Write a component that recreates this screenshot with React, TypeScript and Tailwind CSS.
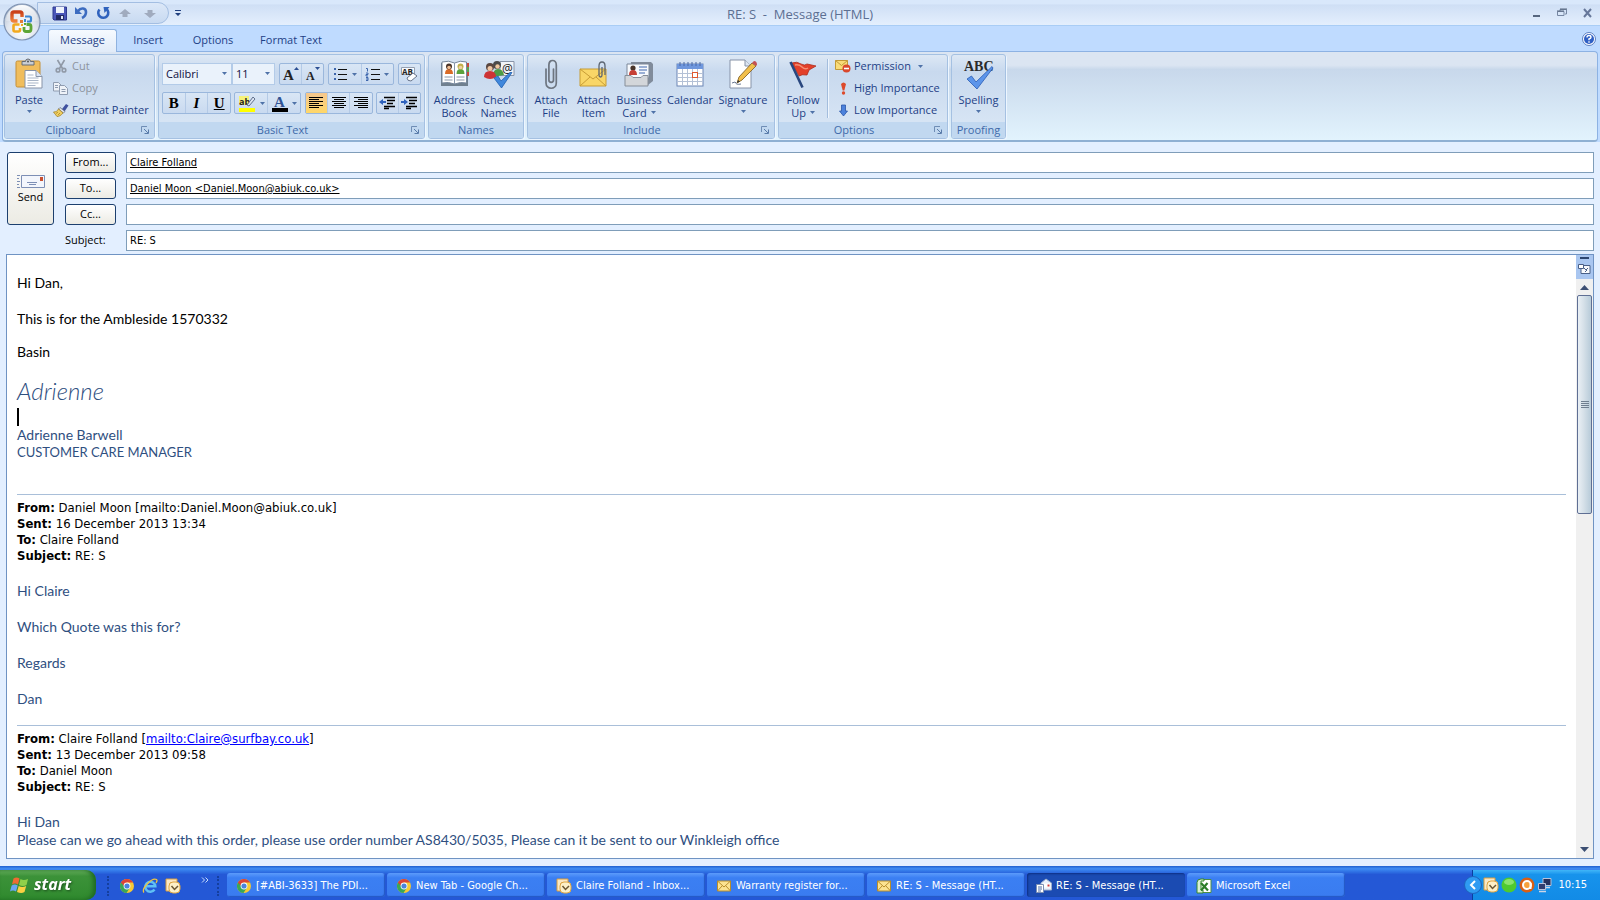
import type { ReactNode } from "react";

const UI = "font-['Open_Sans','Noto_Sans',sans-serif]";
const TAHOMA = "font-['DejaVu_Sans_Condensed','DejaVu_Sans',sans-serif]";

const TASKS = [
  { title: "[#ABI-3633] The PDI...", icon: <ChromeIcon />, active: false },
  { title: "New Tab - Google Ch...", icon: <ChromeIcon />, active: false },
  { title: "Claire Folland - Inbox...", icon: <OutlookIcon />, active: false },
  { title: "Warranty register for...", icon: <MailIcon />, active: false },
  { title: "RE: S - Message (HT...", icon: <MailIcon />, active: false },
  { title: "RE: S - Message (HT...", icon: <OpenMailIcon />, active: true },
  { title: "Microsoft Excel", icon: <ExcelIcon />, active: false },
];

/* ---------- Small shared pieces ---------- */

function Arrow({ className = "" }: { className?: string }) {
  return (
    <svg className={`w-[5px] h-[3px] shrink-0 ${className}`} viewBox="0 0 5 3">
      <path d="M0 0h5L2.5 3z" fill="#4f72a8" />
    </svg>
  );
}

function Group({ label, launcher, className, children }: { label: string; launcher?: boolean; className: string; children: ReactNode }) {
  return (
    <section className={`flex flex-col shrink-0 h-[85px] rounded-[3px] border border-[#a5c1e2] shadow-[1px_1px_0_#edf6ff] bg-linear-to-b from-[#dde8f5] from-0% via-[#c8d9ee] via-20% to-[#dbe8f6] ${className}`}>
      <div className="flex flex-1 min-h-0">{children}</div>
      <div className={`relative h-4 bg-[#c1d8f0] rounded-b-[2px] text-center leading-4 text-[#3e6aaa] ${launcher ? "pr-[18px]" : ""}`}>
        {label}
        {launcher && (
          <button aria-label={`${label} settings`} className="absolute right-1 top-1">
            <svg width="9" height="9" viewBox="0 0 9 9" fill="none">
              <path d="M.5 6V.5H6" stroke="#6f8db5" />
              <path d="M3 3l4 4M7.5 3.5v4h-4" stroke="#5a7caa" />
            </svg>
          </button>
        )}
      </div>
    </section>
  );
}

function BigButton({ icon, lines, arrow, className }: { icon: ReactNode; lines: string[]; arrow?: boolean; className: string }) {
  return (
    <button className={`flex flex-col items-center shrink-0 pt-[3px] leading-[13px] text-[#1e3f86] ${className}`}>
      <span className="flex h-8 mb-[3px] items-center justify-center">{icon}</span>
      <span className="whitespace-nowrap">{lines[0]}</span>
      {lines[1] ? (
        <span className="flex items-center gap-1 whitespace-nowrap">
          {lines[1]}
          {arrow && <Arrow />}
        </span>
      ) : (
        arrow && <Arrow className="mt-1" />
      )}
    </button>
  );
}

function SmallButton({ icon, label, arrow, disabled }: { icon: ReactNode; label: string; arrow?: boolean; disabled?: boolean }) {
  return (
    <button disabled={disabled} className={`flex items-center gap-[3px] h-[22px] whitespace-nowrap ${disabled ? "text-[#8d949e]" : "text-[#1e3f86]"}`}>
      <span className="flex w-4 justify-center">{icon}</span>
      {label}
      {arrow && <Arrow className="ml-1" />}
    </button>
  );
}

function ToolSet({ className, children }: { className: string; children: ReactNode }) {
  return (
    <div className={`flex h-[22px] shrink-0 rounded-[2px] border border-[#9ab7dc] divide-x divide-[#b4cae6] bg-linear-to-b from-[#d9e6f5] to-[#c9daf0] ${className}`}>
      {children}
    </div>
  );
}

function Tool({ label, active, children }: { label: string; active?: boolean; children: ReactNode }) {
  return (
    <button aria-label={label} className={`flex flex-1 items-center justify-center gap-1 ${active ? "bg-linear-to-b from-[#f5c78d] to-[#ffd768]" : ""}`}>
      {children}
    </button>
  );
}

function Combo({ label, value, className }: { label: string; value: string; className: string }) {
  return (
    <div className={`relative h-[22px] border border-[#b3cbe8] bg-[#eaf2fb] ${className}`}>
      <select aria-label={label} className="w-full h-full appearance-none pl-[3px] text-[#101040] outline-none">
        <option>{value}</option>
      </select>
      <Arrow className="absolute right-1 top-2" />
    </div>
  );
}

function Lines({ rows }: { rows: [number, number][] }) {
  return (
    <svg width="16" height="14" viewBox="0 0 16 14">
      {rows.map(([x, w], i) => (
        <rect key={i} x={x} y={1 + i * 2} width={w} height="1" fill="#000" />
      ))}
    </svg>
  );
}

/* ---------- Title bar icons ---------- */

function OfficeButton() {
  return (
    <svg width="38" height="38" viewBox="0 0 38 38">
      <defs>
        <radialGradient id="orb" cx="50%" cy="75%" r="75%">
          <stop offset="0" stopColor="#ffffff" />
          <stop offset=".55" stopColor="#dfe5ee" />
          <stop offset="1" stopColor="#a9b6c9" />
        </radialGradient>
        <linearGradient id="orbShine" x1="0" y1="0" x2="0" y2="1">
          <stop offset="0" stopColor="#fff" />
          <stop offset="1" stopColor="#fff" stopOpacity=".2" />
        </linearGradient>
        <linearGradient id="orbRed" x1="0" y1="0" x2="0" y2="1">
          <stop offset="0" stopColor="#c9401a" />
          <stop offset="1" stopColor="#f0803a" />
        </linearGradient>
      </defs>
      <circle cx="19" cy="19" r="18" fill="url(#orb)" stroke="#7f93b2" strokeWidth="1.2" />
      <path d="M3 18a16 16 0 0 1 32 0z" fill="url(#orbShine)" />
      <g fill="none" strokeLinejoin="round">
        <path d="M14.500 18H11q-2 0-2-2V11q0-2 2-2h6q2 0 2 2v3" stroke="url(#orbRed)" strokeWidth="3.400" />
        <path d="M22 13.500h4.500q1.500 0 1.500 1.500v2q0 1.500-1.500 1.500H24" stroke="#3b86d4" strokeWidth="2.200" />
        <path d="M16.500 21.500H12q-1.500 0-1.500 1.500v4q0 1.500 1.500 1.500h3.500q1.500 0 1.500-1.500V25" stroke="#f2a91d" strokeWidth="2.600" />
        <path d="M23.500 21.500H26q2 0 2 2V26q0 2.500-2 2.500h-3q-2 0-2-2V24" stroke="#5da636" strokeWidth="2.800" />
      </g>
      <rect x="17" y="17" width="3" height="3" fill="#e07a3b" />
      <rect x="21" y="16" width="2" height="3" fill="#3b86d4" />
      <rect x="18" y="21" width="2" height="2" fill="#f2a91d" />
      <rect x="21" y="20" width="2" height="2" fill="#5da636" />
    </svg>
  );
}

function QuickAccess() {
  return (
    <div className="flex items-center gap-[5px] h-[22px] pl-[14px] pr-[10px] rounded-r-full border border-[#a3bee2] bg-linear-to-b from-[#dce8f8] to-[#c8daf1]">
      <button aria-label="Save">
        <svg width="16" height="16" viewBox="0 0 16 16">
          <path d="M1 2h13.500v13H2L1 14z" fill="#4a56b8" stroke="#2f3a8f" />
          <path d="M4 2h8v6H4z" fill="#eef3fc" />
          <path d="M4 10h8v5H4z" fill="#222b66" />
          <path d="M9 11h2v3H9z" fill="#dfe6f5" />
        </svg>
      </button>
      <button aria-label="Undo">
        <svg width="17" height="16" viewBox="0 0 17 16">
          <path d="M5 6c3-4 8-3 8 1 0 3-2 5-4 6" fill="none" stroke="#3d6cc0" strokeWidth="2.600" />
          <path d="M2 2v7h7z" fill="#3d6cc0" />
        </svg>
      </button>
      <button aria-label="Repeat">
        <svg width="17" height="16" viewBox="0 0 17 16">
          <path d="M4.500 4.500a5 5 0 1 0 7-.500" fill="none" stroke="#2f62bd" strokeWidth="2.600" />
          <path d="M8.500 2h6L9.500 8z" fill="#2f62bd" />
        </svg>
      </button>
      <button aria-label="Previous item">
        <svg width="16" height="14" viewBox="0 0 16 14">
          <path d="M8 3l6 5h-3.500v3h-5V8H2z" fill="#a0abbe" />
        </svg>
      </button>
      <button aria-label="Next item" className="ml-1">
        <svg width="16" height="14" viewBox="0 0 16 14">
          <path d="M8 12L2 7h3.500V4h5v3H14z" fill="#a0abbe" />
        </svg>
      </button>
    </div>
  );
}

/* ---------- Ribbon icons ---------- */

function PasteIcon() {
  return (
    <svg width="28" height="32" viewBox="0 0 28 32">
      <rect x="1" y="3" width="24" height="26" rx="1.500" fill="#f0bd5c" stroke="#c48f36" />
      <path d="M7 7V3.500h3.500a2.500 2.500 0 0 1 5 0H19V7z" fill="#c9cdd3" stroke="#666c75" />
      <circle cx="13" cy="3.500" r="1" fill="#555" />
      <path d="M10 12.500h11l6 6V30H10z" fill="#fff" stroke="#8793a8" />
      <path d="M21 12.500v6h6" fill="#dce5f2" stroke="#8793a8" />
      <path d="M12.500 17h6M12.500 20h11M12.500 22.500h11M12.500 25h11M12.500 27.500h8" stroke="#a9b5c7" />
    </svg>
  );
}

function ScissorsIcon() {
  return (
    <svg width="12" height="14" viewBox="0 0 12 14" fill="none" stroke="#9099a6" strokeWidth="1.600">
      <path d="M2.500 1l5 8.500M9.500 1L4.500 9.500" />
      <circle cx="3" cy="11.200" r="1.800" />
      <circle cx="9" cy="11.200" r="1.800" />
    </svg>
  );
}

function CopyIcon() {
  return (
    <svg width="16" height="14" viewBox="0 0 16 14" fill="#eef2f8" stroke="#8f9cb0">
      <path d="M.5 1.500h5l2.500 2.500v6H.5z" />
      <path d="M6.500 4.500h5l3 3v6h-8z" />
      <path d="M2 4.500h3M2 6.500h3M8.500 8.500h4M8.500 10.500h4" />
    </svg>
  );
}

function BrushIcon() {
  return (
    <svg width="16" height="14" viewBox="0 0 16 14">
      <path d="M9 6l4-5 2.500 1.500-4 6z" fill="#3f51a0" />
      <path d="M7 4.500l5 4-1.500 1.500-5-4z" fill="#e4e7ee" stroke="#666e80" strokeWidth=".8" />
      <path d="M5.500 6L10 10c-2 2.500-4 3.500-6 3.500L.5 9C3 9 4.500 8 5.500 6z" fill="#f0cf62" stroke="#a3842c" strokeWidth=".8" />
      <path d="M3 10.500l2-1.500M5 12l2-2" stroke="#b9962f" />
    </svg>
  );
}

function AddressBookIcon() {
  return (
    <svg width="30" height="28" viewBox="0 0 30 28">
      <path d="M1 3h27v23H1z" fill="#70808f" />
      <path d="M26 3h3v4h-3zM26 12h3v4h-3z" fill="#c94b3b" />
      <path d="M26 7h3v5h-3z" fill="#5fa447" />
      <path d="M2 2q7-2 12.500 1Q20 0 26.500 2v21q-6-1.500-12 1-6-2.500-12.500-1z" fill="#fff" stroke="#77889d" />
      <path d="M14.500 3v21" stroke="#8696aa" />
      <path d="M5 14q0-5 4-5t4 5z" fill="#d96b27" />
      <circle cx="9" cy="6.500" r="3" fill="#4b3428" />
      <path d="M16.500 14q0-5 4-5t4 5z" fill="#5ba33c" />
      <circle cx="20.500" cy="6.500" r="3" fill="#c2b04b" />
      <circle cx="9" cy="7.500" r="1.800" fill="#efbd93" />
      <circle cx="20.500" cy="7.500" r="1.800" fill="#efd0a5" />
      <path d="M4.500 17h8M4.500 20h8M16.500 17h8M16.500 20h8" stroke="#8b99ab" />
    </svg>
  );
}

function CheckNamesIcon() {
  return (
    <svg width="32" height="29" viewBox="0 0 32 29">
      <path d="M17 1.500h14v14H17z" fill="#f1f4f9" stroke="#8894a8" />
      <text x="19" y="13" fontSize="12" fill="#222" fontFamily="Open Sans">@</text>
      <circle cx="14" cy="5" r="4" fill="#4a4a4a" />
      <path d="M10 17q0-8 5-8t6 6z" fill="#4c9c46" />
      <circle cx="14.500" cy="6.500" r="2.200" fill="#f0c79f" />
      <circle cx="7" cy="7" r="4" fill="#5a4740" />
      <circle cx="7" cy="8.500" r="2.500" fill="#efc6a4" />
      <path d="M1 17q0-6 6-6t6 6q-6 4-12 0z" fill="#cc3335" />
      <path d="M11 18l4-2 3 5L27 12.500h2L18.500 28z" fill="#3f87dc" stroke="#1f5fb0" strokeWidth=".8" />
    </svg>
  );
}

function PaperclipIcon() {
  return (
    <svg width="14" height="31" viewBox="0 0 14 31" fill="none" strokeLinecap="round">
      <path d="M9.500 10v11a2.300 2.300 0 0 1-4.600 0V6c0-6 7.400-6 7.400 0v18c0 7-10.300 7-10.300 0V10" stroke="#6d7580" strokeWidth="1.700" />
    </svg>
  );
}

function AttachItemIcon() {
  return (
    <svg width="30" height="27" viewBox="0 0 30 27">
      <path d="M1 8h26v17H1z" fill="#f9d667" stroke="#c79c35" />
      <path d="M1 25l10-9M27 25l-10-9M1 8l13 10L27 8" fill="none" stroke="#c79c35" />
      <path d="M23 6v8q0 2-1.500 2T20 14V5q0-4 3-4t3 4v9" fill="none" stroke="#5d6672" strokeWidth="1.300" />
    </svg>
  );
}

function BusinessCardIcon() {
  return (
    <svg width="30" height="26" viewBox="0 0 30 26">
      <path d="M7 1h20l2 2v17l-5 4H6z" fill="#818c9b" />
      <path d="M3 3h22v14H3z" fill="#f6f9fd" stroke="#7a8799" />
      <circle cx="9" cy="7" r="2.600" fill="#49352b" />
      <path d="M5 14q0-5 4-5t4 5z" fill="#c63f36" />
      <path d="M15 6h8M15 9h8M15 12h6" stroke="#3e66ae" />
      <path d="M1 14.500h6l2 2h8l2-2h5V25H1z" fill="#d3d6da" stroke="#868e99" />
    </svg>
  );
}

function CalendarIcon() {
  return (
    <svg width="28" height="27" viewBox="0 0 28 27">
      <rect x="1" y="3" width="26" height="22" fill="#fff" stroke="#6d86b5" />
      <path d="M1 3h26v5H1z" fill="#6f97dd" />
      <path d="M4 1v4M8 1v4M12 1v4M16 1v4M20 1v4M24 1v4" stroke="#4a68a4" />
      <path d="M6.500 8v17M11.500 8v17M16.500 8v17M21.500 8v17M1 12.500h26M1 16.500h26M1 20.500h26" stroke="#b4c1d6" />
      <rect x="16.500" y="11.500" width="5" height="5" fill="#fff" stroke="#e0582f" />
    </svg>
  );
}

function SignatureIcon() {
  return (
    <svg width="30" height="30" viewBox="0 0 30 30">
      <path d="M2 1h15l6 6v22H2z" fill="#fff" stroke="#8793a8" />
      <path d="M17 1v6h6" fill="#dde6f2" stroke="#8793a8" />
      <path d="M4 24q4-2 4 0t5 1" stroke="#6b7a94" fill="none" />
      <path d="M9 24l2-6L24 4l4 3L14 21z" fill="#f2bf4b" stroke="#87652a" strokeWidth=".9" />
      <path d="M24 4l2-2q3 0 3 4l-1 1z" fill="#c44f52" />
      <path d="M9 24l1-3 2 1.500z" fill="#333" />
    </svg>
  );
}

function FlagIcon() {
  return (
    <svg width="28" height="29" viewBox="0 0 28 29">
      <path d="M3 3q5-2 9 1 4 2 6 0l9 2-7 4-2 5q-5-1-8 1z" fill="#e3402a" stroke="#ad2c1c" strokeWidth=".8" />
      <path d="M6 5q4-1 7 2t6 1" stroke="#f58e73" strokeWidth="1.500" fill="none" />
      <path d="M1.500 2l12 25.500" stroke="#29477f" strokeWidth="2.600" />
    </svg>
  );
}

function PermissionIcon() {
  return (
    <svg width="16" height="14" viewBox="0 0 16 14">
      <path d="M.5 1.500h12v9H.5z" fill="#f9dc78" stroke="#c39a37" />
      <path d="M.5 1.500l6 5 6-5" fill="none" stroke="#c39a37" />
      <circle cx="11.500" cy="9.500" r="4" fill="#d9482e" />
      <path d="M9 9.500h5" stroke="#fff" strokeWidth="1.600" />
    </svg>
  );
}

function HighIcon() {
  return (
    <svg width="7" height="13" viewBox="0 0 7 13" fill="#dd4a2c">
      <path d="M1 2q2.500-3 5 0L4.300 8.500H2.700z" />
      <circle cx="3.500" cy="11" r="1.700" />
    </svg>
  );
}

function LowIcon() {
  return (
    <svg width="9" height="13" viewBox="0 0 9 13">
      <path d="M2.500 1h4v6H8.500l-4 5-4-5h2z" fill="#4c82dc" stroke="#2a56a8" strokeWidth=".8" />
    </svg>
  );
}

function SpellingIcon() {
  return (
    <svg width="32" height="31" viewBox="0 0 32 31">
      <text x="1" y="12" fontSize="14" fontWeight="700" fontFamily="Liberation Serif" fill="#2a2a2a">ABC</text>
      <path d="M4 20l4.500-3 4.500 6L29 7.500 30 9 14 30z" fill="#5c95ea" stroke="#2a5cb4" strokeWidth=".8" />
    </svg>
  );
}

/* ---------- Taskbar icons ---------- */

function ChromeIcon() {
  return (
    <svg width="16" height="16" viewBox="0 0 16 16">
      <circle cx="8" cy="8" r="7" fill="#f5c934" />
      <path d="M8 8L1.900 4.500A7 7 0 0 0 7.500 15l3.500-5.500z" fill="#3aa757" />
      <path d="M1.900 4.500A7 7 0 0 1 14.100 4.500H8L5 8z" fill="#db4437" />
      <circle cx="8" cy="8" r="3.400" fill="#fff" />
      <circle cx="8" cy="8" r="2.600" fill="#4a83dc" />
    </svg>
  );
}

function IeIcon() {
  return (
    <svg width="16" height="16" viewBox="0 0 16 16" fill="none">
      <path d="M12.500 11.500a5 5 0 1 1 .8-3.200H4" stroke="#5fc0f5" strokeWidth="2.500" />
      <path d="M2 14.500C-1 11 10-1 14.500 1.500c1 .8.500 2-.5 3.500" stroke="#f0c540" strokeWidth="1.300" />
    </svg>
  );
}

function OutlookIcon() {
  return (
    <svg width="16" height="16" viewBox="0 0 16 16">
      <path d="M1 1h11v4H5v8H1z" fill="#fbe8c4" stroke="#d79b3c" />
      <rect x="4" y="4" width="11" height="11" rx="4" fill="#fdf0c8" stroke="#dda543" />
      <path d="M6.500 8l3 3.500L13 8" fill="none" stroke="#6a5632" strokeWidth="1.500" />
    </svg>
  );
}

function MailIcon() {
  return (
    <svg width="14" height="12" viewBox="0 0 14 12">
      <path d="M.5 1h13v10H.5z" fill="#fbe391" stroke="#b88d2b" />
      <path d="M.5 1l6.500 6 6.500-6M.5 11l4.500-5M13.500 11L9 6" fill="none" stroke="#b88d2b" />
    </svg>
  );
}

function OpenMailIcon() {
  return (
    <svg width="16" height="16" viewBox="0 0 16 16">
      <path d="M5 5l5-4 5.500 4v7H5z" fill="#e9f0fb" stroke="#9eb0cc" />
      <path d="M7 5.500h7v4H7z" fill="#fff" />
      <rect x="11.500" y="6.500" width="2" height="2" fill="#cf3c3c" />
      <path d="M.5 6.500h7v8h-7z" fill="#fff" stroke="#7c90b3" />
      <path d="M2 9h4M2 11h4M2 13h3" stroke="#4c6ca6" />
    </svg>
  );
}

function ExcelIcon() {
  return (
    <svg width="16" height="16" viewBox="0 0 16 16">
      <path d="M4 1.500h11v13H4z" fill="#fff" stroke="#4d8f43" />
      <path d="M1 4.500Q1 1 5 1h3v2H5v9h2v3H1z" fill="#d9f0d2" stroke="#37852f" />
      <path d="M5 5l7 7.500M11.500 5L5 12.500" stroke="#2c7c28" strokeWidth="2.200" />
    </svg>
  );
}

function WindowsFlag() {
  return (
    <svg width="19" height="18" viewBox="0 0 19 18">
      <path d="M3.500 2.500q3-2 6 0L8 8.500q-3-2-6 0z" fill="#ef6b32" />
      <path d="M10.500 3q3 2 7.500 0L16.500 9q-3.500 2-7.500 0z" fill="#8fd04a" />
      <path d="M1.700 9.500q3-2 6 0L6 15.500q-3-2-6 0z" fill="#6aa5f2" />
      <path d="M8.700 10q3.500 2 7.500 0L14.500 16q-3 2-7.500 0z" fill="#fbd043" />
    </svg>
  );
}

/* ---------- Page sections ---------- */

function TitleBar() {
  return (
    <header className="relative grid grid-cols-[1fr_auto_1fr] h-[26px] items-start border-b border-[#a9cdf5] bg-linear-to-b from-[#d9e8fb] from-15% via-[#cfdff5] via-20% to-[#e4effd]">
      <button aria-label="Office menu" className="absolute left-[3px] top-[3px] z-10">
        <OfficeButton />
      </button>
      <div className="flex items-center gap-[6px] pl-[37px] pt-[2px]">
        <QuickAccess />
        <button aria-label="Customize quick access">
          <svg width="6" height="6" viewBox="0 0 6 6" fill="#1f3f7f">
            <path d="M0 0h6v1H0zM0 3h6L3 6z" />
          </svg>
        </button>
      </div>
      <h1 className="pt-1 text-[13px] leading-5 text-[#5c6f92] whitespace-pre">RE: S  -  Message (HTML)</h1>
      <div className="flex items-center justify-end gap-4 pr-2 pt-[7px]">
        <button aria-label="Minimize">
          <svg width="9" height="12" viewBox="0 0 9 12">
            <path d="M1 8h7v2H1z" fill="#56667f" />
          </svg>
        </button>
        <button aria-label="Restore">
          <svg width="10" height="12" viewBox="0 0 10 12" fill="none">
            <path d="M3 4V2.500h6.500V7H8" stroke="#7687a3" />
            <path d="M.5 4.500h6.500v4H.5z" stroke="#7687a3" />
            <path d="M0 4h7M3 2h7" stroke="#56667f" />
          </svg>
        </button>
        <button aria-label="Close">
          <svg width="9" height="12" viewBox="0 0 9 12">
            <path d="M1 2l7 8M8 2l-7 8" stroke="#66779a" strokeWidth="2" />
          </svg>
        </button>
      </div>
    </header>
  );
}

function Tabs() {
  return (
    <nav className="flex h-[25px] items-end bg-[#bfdbff] pl-[48px] pr-1 text-[#1e3f86]">
      <button className="relative z-10 w-[69px] h-[23px] -mb-px pb-[2px] rounded-t-[3px] border border-b-0 border-[#8fb2df] bg-linear-to-b from-[#f6faff] to-[#e1ebf8]">Message</button>
      <button className="w-[62px] h-[22px]">Insert</button>
      <button className="w-[68px] h-[22px]">Options</button>
      <button className="w-[88px] h-[22px]">Format Text</button>
      <button aria-label="Help" className="ml-auto self-center">
        <svg width="14" height="14" viewBox="0 0 14 14">
          <circle cx="7" cy="7" r="6.500" fill="#fff" stroke="#5d7fc0" />
          <circle cx="7" cy="7" r="5" fill="#2f5fc4" />
          <path d="M5 5.500q0-2 2-2t2 1.700Q9 6.300 7 7v1.200M7 9.300v1.500" stroke="#fff" strokeWidth="1.400" fill="none" />
        </svg>
      </button>
    </nav>
  );
}

function BasicText() {
  return (
    <div className="flex flex-1 flex-col gap-[7px] pl-[3px] pr-[3px] pt-2">
      <div className="flex justify-between">
        <div className="flex">
          <Combo label="Font" value="Calibri" className="w-[70px]" />
          <Combo label="Font size" value="11" className="w-[43px]" />
        </div>
        <ToolSet className="w-[45px]">
          <Tool label="Grow font">
            <svg width="17" height="16" viewBox="0 0 17 16">
              <text x="1" y="14" fontSize="15" fontWeight="700" fontFamily="Liberation Serif" fill="#222">A</text>
              <path d="M12 4l2.500-3L17 4z" fill="#2c4f93" />
            </svg>
          </Tool>
          <Tool label="Shrink font">
            <svg width="17" height="16" viewBox="0 0 17 16">
              <text x="2" y="14" fontSize="12" fontWeight="700" fontFamily="Liberation Serif" fill="#222">A</text>
              <path d="M11 1h5l-2.500 3z" fill="#2c4f93" />
            </svg>
          </Tool>
        </ToolSet>
        <ToolSet className="w-[66px]">
          <Tool label="Bullets">
            <svg width="15" height="14" viewBox="0 0 15 14">
              <path d="M5 2.500h9M5 7.500h9M5 12.500h9" stroke="#111" />
              <path d="M1 1h2v2H1zM1 6h2v2H1zM1 11h2v2H1z" fill="#3d66ad" />
            </svg>
            <Arrow />
          </Tool>
          <Tool label="Numbering">
            <svg width="15" height="14" viewBox="0 0 15 14">
              <path d="M6 2.500h9M6 7.500h9M6 12.500h9" stroke="#111" />
              <path d="M1 1.500h1.500v3M1 6h2v1.500H1V9h2M1 10.500h2v3H1M1 12h2" fill="none" stroke="#3d66ad" />
            </svg>
            <Arrow />
          </Tool>
        </ToolSet>
        <ToolSet className="w-[23px]">
          <Tool label="Clear formatting">
            <svg width="17" height="16" viewBox="0 0 17 16">
              <path d="M.5 1.500h13v7H.5z" fill="#f8fafd" stroke="#95a0b2" />
              <text x="1" y="9" fontSize="8" fontWeight="700" fontFamily="Open Sans" fill="#222">AB</text>
              <path d="M6 12l6-5 4 3-6 5q-4 0-4-3z" fill="#fff" stroke="#68758c" />
            </svg>
          </Tool>
        </ToolSet>
      </div>
      <div className="flex justify-between">
        <ToolSet className="w-[69px] font-['Liberation_Serif',serif] text-[15px] text-black">
          <Tool label="Bold"><b>B</b></Tool>
          <Tool label="Italic"><b className="italic">I</b></Tool>
          <Tool label="Underline"><b className="underline">U</b></Tool>
        </ToolSet>
        <ToolSet className="w-[67px]">
          <Tool label="Highlight">
            <svg width="18" height="18" viewBox="0 0 18 18">
              <path d="M1 2h10v9H1z" fill="#f5f27a" />
              <text x="1" y="11" fontSize="9" fontWeight="700" fontFamily="Open Sans" fill="#222">ab</text>
              <path d="M9 11l6-8 2 2-6 7z" fill="#dbe4f2" stroke="#60708c" />
              <path d="M1 14h16v4H1z" fill="#ffff00" />
            </svg>
            <Arrow />
          </Tool>
          <Tool label="Font color">
            <svg width="16" height="18" viewBox="0 0 16 18">
              <text x="2" y="13" fontSize="15" fontWeight="700" fontFamily="Liberation Serif" fill="#2f5394">A</text>
              <path d="M0 14h16v4H0z" fill="#000" />
            </svg>
            <Arrow />
          </Tool>
        </ToolSet>
        <ToolSet className="w-[68px]">
          <Tool label="Align left" active>
            <Lines rows={[[1, 14], [1, 10], [1, 14], [1, 10], [1, 14], [1, 10]]} />
          </Tool>
          <Tool label="Center">
            <Lines rows={[[1, 14], [3, 10], [1, 14], [3, 10], [1, 14], [3, 10]]} />
          </Tool>
          <Tool label="Align right">
            <Lines rows={[[1, 14], [5, 10], [1, 14], [5, 10], [1, 14], [5, 10]]} />
          </Tool>
        </ToolSet>
        <ToolSet className="w-[45px]">
          <Tool label="Decrease indent">
            <svg width="17" height="14" viewBox="0 0 17 14">
              <path d="M5 1.500h11M8 4.500h8M8 7.500h6M5 10.500h11M5 12.500h5" stroke="#000" strokeWidth="1.500" />
              <path d="M0 6l4-3v2h3v2H4v2z" fill="#2f62bd" />
            </svg>
          </Tool>
          <Tool label="Increase indent">
            <svg width="17" height="14" viewBox="0 0 17 14">
              <path d="M5 1.500h11M8 4.500h8M8 7.500h6M5 10.500h11M5 12.500h5" stroke="#000" strokeWidth="1.500" />
              <path d="M7 6L3 3v2H0v2h3v2z" fill="#2f62bd" />
            </svg>
          </Tool>
        </ToolSet>
      </div>
    </div>
  );
}

function Ribbon() {
  return (
    <div className="px-[2px] bg-[#bfdbff]">
      <div className="flex gap-[3px] h-[91px] pl-[1px] pt-[2px] rounded-[4px] border border-[#8db2e3] border-b-2 border-b-[#8fb0d3] bg-linear-to-b from-[#dbe5f2] from-15% via-[#c8d8eb] via-20% to-[#e2f3fd]">
        <Group label="Clipboard" launcher className="w-[151px]">
          <BigButton icon={<PasteIcon />} lines={["Paste"]} arrow className="w-[48px]" />
          <div className="flex flex-col">
            <SmallButton icon={<ScissorsIcon />} label="Cut" disabled />
            <SmallButton icon={<CopyIcon />} label="Copy" disabled />
            <SmallButton icon={<BrushIcon />} label="Format Painter" />
          </div>
        </Group>
        <Group label="Basic Text" launcher className="w-[267px]">
          <BasicText />
        </Group>
        <Group label="Names" className="w-[96px]">
          <BigButton icon={<AddressBookIcon />} lines={["Address", "Book"]} className="w-[51px]" />
          <BigButton icon={<CheckNamesIcon />} lines={["Check", "Names"]} className="w-[37px]" />
        </Group>
        <Group label="Include" launcher className="w-[248px]">
          <BigButton icon={<PaperclipIcon />} lines={["Attach", "File"]} className="w-[46px]" />
          <BigButton icon={<AttachItemIcon />} lines={["Attach", "Item"]} className="w-[39px]" />
          <BigButton icon={<BusinessCardIcon />} lines={["Business", "Card"]} arrow className="w-[52px]" />
          <BigButton icon={<CalendarIcon />} lines={["Calendar"]} className="w-[50px]" />
          <BigButton icon={<SignatureIcon />} lines={["Signature"]} arrow className="w-[56px]" />
        </Group>
        <Group label="Options" launcher className="w-[170px]">
          <BigButton icon={<FlagIcon />} lines={["Follow", "Up"]} arrow className="w-[48px]" />
          <div className="my-1 mr-[7px] w-px bg-[#a3bddd] shadow-[1px_0_0_#eef5fd]" />
          <div className="flex flex-col">
            <SmallButton icon={<PermissionIcon />} label="Permission" arrow />
            <SmallButton icon={<HighIcon />} label="High Importance" />
            <SmallButton icon={<LowIcon />} label="Low Importance" />
          </div>
        </Group>
        <Group label="Proofing" className="w-[55px]">
          <BigButton icon={<SpellingIcon />} lines={["Spelling"]} arrow className="w-[53px]" />
        </Group>
      </div>
    </div>
  );
}

function FieldButton({ children }: { children: ReactNode }) {
  return (
    <button className="w-[51px] h-[21px] shrink-0 rounded-[3px] border border-[#1c3f6e] bg-linear-to-b from-white to-[#ecebe4] text-black">
      {children}
    </button>
  );
}

function Envelope() {
  const field = "flex-1 min-w-0 h-[21px] border border-[#7f9db9] bg-white px-[3px] text-[11px] text-black outline-none";
  return (
    <form className="flex items-start pl-[7px] pr-[6px] pt-[10px]">
      <button type="button" className="flex flex-col items-center justify-center w-[47px] h-[73px] mr-[11px] pt-[2px] shrink-0 rounded-[3px] border border-[#1c3f6e] bg-linear-to-b from-white to-[#ecebe4] text-black">
        <svg width="30" height="15" viewBox="0 0 30 15">
          <path d="M5.500 1.500h23v12h-23z" fill="#f3f6fc" stroke="#7d8fb5" />
          <path d="M24 3h3v4h-3z" fill="#c9502f" />
          <path d="M11 8.500h10M13 10.500h7M1 1.500h3M1 4.500h2M1 7.500h3M1 10.500h2M1 13.500h3" stroke="#7d8fb5" />
        </svg>
        Send
      </button>
      <div className="flex flex-1 min-w-0 flex-col gap-[5px]">
        <div className="flex gap-[10px]">
          <FieldButton>From...</FieldButton>
          <input aria-label="From" defaultValue="Claire Folland" className={`${field} ${TAHOMA} underline`} />
        </div>
        <div className="flex gap-[10px]">
          <FieldButton>To...</FieldButton>
          <input aria-label="To" defaultValue="Daniel Moon <Daniel.Moon@abiuk.co.uk>" className={`${field} ${TAHOMA} underline`} />
        </div>
        <div className="flex gap-[10px]">
          <FieldButton>Cc...</FieldButton>
          <input aria-label="Cc" className={`${field} ${TAHOMA}`} />
        </div>
        <div className="flex items-center gap-[10px]">
          <label htmlFor="subject" className="w-[51px] shrink-0 text-black">Subject:</label>
          <input id="subject" defaultValue="RE: S" className={`${field} ${TAHOMA}`} />
        </div>
      </div>
    </form>
  );
}

function QuoteHeader({ from, sent, to }: { from: ReactNode; sent: string; to: string }) {
  return (
    <div className={`${TAHOMA} mr-[10px] border-t border-[#a9bfd9] pt-[5px] text-[13px] leading-4 text-black`}>
      <p><b>From:</b> {from}</p>
      <p><b>Sent:</b> {sent}</p>
      <p><b>To:</b> {to}</p>
      <p><b>Subject:</b> RE: S</p>
    </div>
  );
}

function ScrollBar() {
  return (
    <div className="flex w-[17px] shrink-0 flex-col items-center bg-[#f0f0f0]">
      <button aria-label="Show fields" className="flex w-full h-6 flex-col items-center bg-[#a9c6f0] pt-[2px]">
        <svg width="13" height="18" viewBox="0 0 13 18">
          <path d="M2 0h9v2H2z" fill="#2c456f" />
          <path d="M3 8.500h9v8H3z" fill="#f8fafd" stroke="#4a6088" />
          <path d="M.5 7.500h5v4h-5z" fill="#fff" stroke="#4a6088" />
          <path d="M6 11l2 2 2-2M7 15l2-2" stroke="#4a6088" fill="none" />
        </svg>
      </button>
      <button aria-label="Scroll up" className="flex h-4 w-full items-center justify-center">
        <svg width="9" height="5" viewBox="0 0 9 5"><path d="M0 5h9L4.500 0z" fill="#3c4f73" /></svg>
      </button>
      <div className="flex w-[15px] h-[219px] items-center justify-center rounded-[2px] border border-[#5f6f94] bg-linear-to-r from-[#eaf0f5] via-[#d5e0e8] via-45% to-[#b7cbd9]">
        <svg width="8" height="8" viewBox="0 0 8 8"><path d="M0 .5h8M0 2.500h8M0 4.500h8M0 6.500h8" stroke="#6f7f90" /></svg>
      </div>
      <button aria-label="Scroll down" className="mt-auto flex h-[17px] w-full items-center justify-center">
        <svg width="9" height="5" viewBox="0 0 9 5"><path d="M0 0h9L4.500 5z" fill="#3c4f73" /></svg>
      </button>
    </div>
  );
}

function MessageBody() {
  return (
    <main className="flex flex-1 mt-[3px] mx-[6px] mb-[7px] border border-[#6f93c3] bg-white">
      <article className="flex-1 min-w-0 pl-[10px] pt-[19px] font-['Lato','Open_Sans',sans-serif] text-sm leading-[18px] text-[#2f4f7f]">
        <p className="text-black">Hi Dan,</p>
        <p className="mt-[18px] text-black">This is for the Ambleside 1570332</p>
        <p className="mt-[15px] text-black">Basin</p>
        <p className="mt-[14px] text-2xl leading-8 font-light italic">Adrienne</p>
        <div className="mt-px w-[2px] h-[18px] bg-black" />
        <p>Adrienne Barwell</p>
        <p className="text-[13px] leading-4">CUSTOMER CARE MANAGER</p>
        <div className="mt-[34px]">
          <QuoteHeader from="Daniel Moon [mailto:Daniel.Moon@abiuk.co.uk]" sent="16 December 2013 13:34" to="Claire Folland" />
        </div>
        <p className="mt-[18px]">Hi Claire</p>
        <p className="mt-[18px]">Which Quote was this for?</p>
        <p className="mt-[18px]">Regards</p>
        <p className="mt-[18px]">Dan</p>
        <div className="mt-[17px]">
          <QuoteHeader
            from={<>Claire Folland [<a href="mailto:Claire@surfbay.co.uk" className="text-[#0000ff] underline">mailto:Claire@surfbay.co.uk</a>]</>}
            sent="13 December 2013 09:58"
            to="Daniel Moon"
          />
        </div>
        <p className="mt-[18px]">Hi Dan</p>
        <p>Please can we go ahead with this order, please use order number AS8430/5035, Please can it be sent to our Winkleigh office</p>
      </article>
      <ScrollBar />
    </main>
  );
}

function Grip() {
  return <div className="h-5 border-l-2 border-dotted border-[#153f9e]" />;
}

function Taskbar() {
  return (
    <footer className={`${TAHOMA} flex h-[34px] items-stretch bg-linear-to-b from-[#1f5fcf] from-0% via-[#3f8cf3] via-8% to-[#2458d6] to-25% text-[11px] text-white`}>
      <button className="flex w-[96px] mt-1 shrink-0 items-center gap-[5px] rounded-r-[10px] bg-linear-to-b from-[#6cb562] via-[#3c9239] via-20% to-[#2f8a2e] pl-[10px] font-['Open_Sans',sans-serif] text-base leading-none font-bold italic text-white shadow-[inset_-3px_0_4px_#1f6a22]">
        <WindowsFlag />
        <span className="pb-[2px] drop-shadow-[1px_1px_1px_#1d4f1d]">start</span>
      </button>
      <div className="flex shrink-0 items-center w-[131px] pl-[11px] pt-[5px]">
        <Grip />
        <div className="flex items-center gap-[7px] pl-[10px]">
          <button aria-label="Google Chrome"><ChromeIcon /></button>
          <button aria-label="Internet Explorer"><IeIcon /></button>
          <button aria-label="Outlook"><OutlookIcon /></button>
        </div>
        <button aria-label="More" className="ml-5 mb-3">
          <svg width="8" height="6" viewBox="0 0 8 6" fill="none" stroke="#c9dcfb"><path d="M1 .5L3.500 3 1 5.500M4.500.5L7 3 4.500 5.500" /></svg>
        </button>
        <div className="ml-2"><Grip /></div>
      </div>
      <div className="flex flex-1 min-w-0 gap-[2px] pt-[7px] pb-[3px]">
        {TASKS.map((task, i) => (
          <button
            key={i}
            className={`flex w-[158px] min-w-0 items-center gap-1 rounded-[3px] pl-[9px] pr-1 pt-[2px] whitespace-nowrap overflow-hidden ${
              task.active
                ? "bg-[#1b4bb2] shadow-[inset_1px_1px_2px_#0d2f83]"
                : "bg-linear-to-b from-[#5c9bfb] via-[#3b7ff3] via-20% to-[#3a7cf0] shadow-[inset_-1px_-1px_1px_#2458c4]"
            }`}
          >
            <span className="flex w-4 shrink-0 justify-center">{task.icon}</span>
            {task.title}
          </button>
        ))}
      </div>
      <div className="relative flex w-[128px] mt-1 shrink-0 items-center gap-[2px] border-l border-[#0b3f9f] bg-linear-to-b from-[#3fb6f8] via-[#1793ec] via-15% to-[#128be6] pl-2">
        <button aria-label="Show hidden icons" className="absolute -left-[9px] top-[6px]">
          <svg width="18" height="18" viewBox="0 0 18 18">
            <circle cx="9" cy="9" r="8.500" fill="#2f9bf2" stroke="#1e62bd" />
            <path d="M11 5L7 9l4 4" fill="none" stroke="#fff" strokeWidth="2" />
          </svg>
        </button>
        <span className="ml-[2px]"><OutlookIcon /></span>
        <svg width="16" height="16" viewBox="0 0 16 16">
          <circle cx="8" cy="8" r="7.500" fill="#4fca2f" />
          <ellipse cx="8" cy="5" rx="5" ry="3" fill="#8be36d" />
        </svg>
        <svg width="16" height="16" viewBox="0 0 16 16">
          <circle cx="8" cy="8" r="7.500" fill="#d95f14" />
          <circle cx="8" cy="8" r="4" fill="#f6a13c" stroke="#fff" strokeWidth="2" />
          <path d="M11.500 6v6" stroke="#fff" strokeWidth="2" />
        </svg>
        <svg width="16" height="16" viewBox="0 0 16 16">
          <path d="M6 1.500h8v7H6z" fill="#26325e" stroke="#b8c2da" />
          <path d="M1.500 6.500h7v6h-7z" fill="#313d70" stroke="#b8c2da" />
          <path d="M2 14.500h7M9 10.500h4" stroke="#cdd5e6" strokeWidth="1.500" />
        </svg>
        <time className="ml-auto pr-[13px]">10:15</time>
      </div>
    </footer>
  );
}

export default function App() {
  return (
    <div className={`${UI} flex min-h-screen flex-col bg-[#e3efff] text-[11px]`}>
      <TitleBar />
      <Tabs />
      <Ribbon />
      <Envelope />
      <MessageBody />
      <Taskbar />
    </div>
  );
}
